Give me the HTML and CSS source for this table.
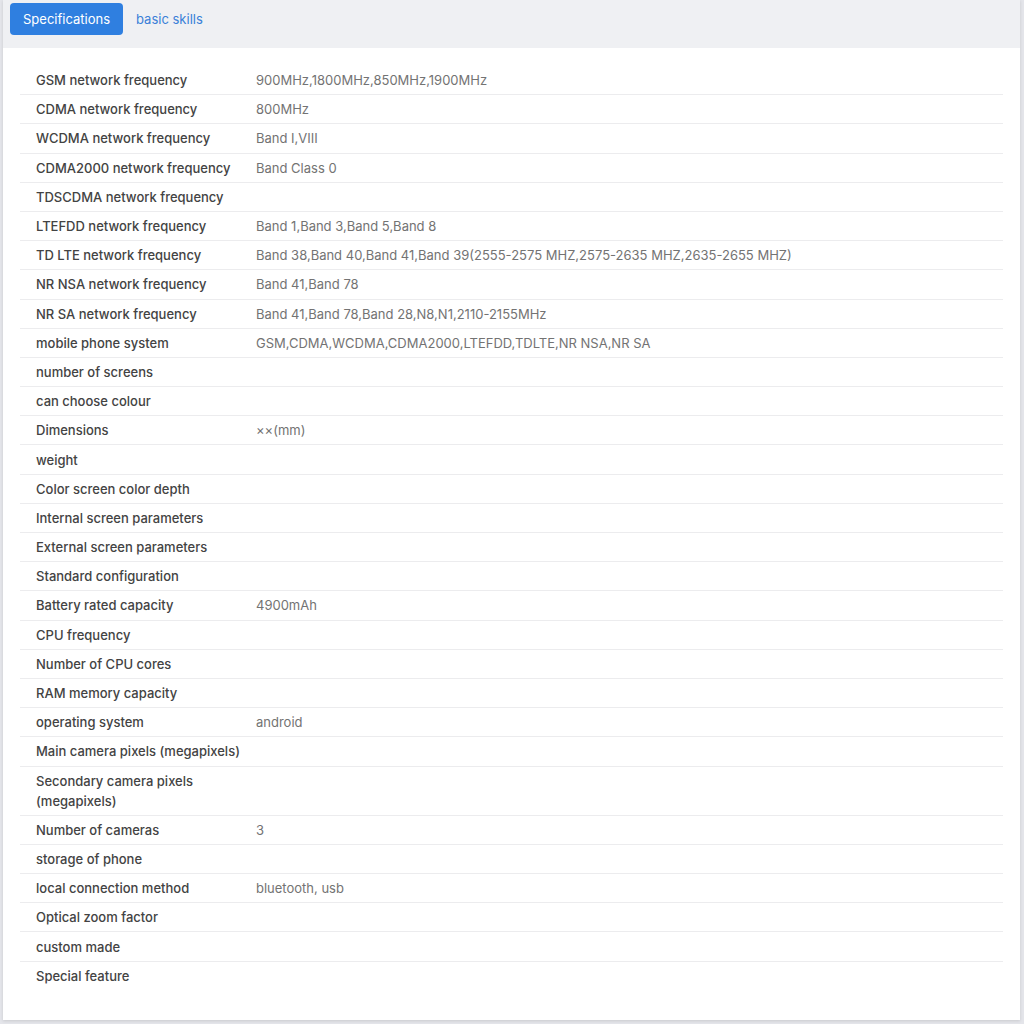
FILE: index.html
```html
<!DOCTYPE html>
<html lang="en">
<head>
    <meta charset="UTF-8">
    <meta name="viewport" content="width=device-width, initial-scale=1.0">
    <title>Specifications</title>
    <link rel="stylesheet" href="styles.css">
</head>
<body>

    <div class="page">
        <div class="tabs">
            <button class="tab active">Specifications</button>
            <button class="tab">basic skills</button>
        </div>

        <div class="panel">
            <table class="spec-table">
                <tr><td class="label">GSM network frequency</td><td class="value">900MHz,1800MHz,850MHz,1900MHz</td></tr>
                <tr><td class="label">CDMA network frequency</td><td class="value">800MHz</td></tr>
                <tr><td class="label">WCDMA network frequency</td><td class="value">Band I,VIII</td></tr>
                <tr><td class="label">CDMA2000 network frequency</td><td class="value">Band Class 0</td></tr>
                <tr><td class="label">TDSCDMA network frequency</td><td class="value"></td></tr>
                <tr><td class="label">LTEFDD network frequency</td><td class="value">Band 1,Band 3,Band 5,Band 8</td></tr>
                <tr><td class="label">TD LTE network frequency</td><td class="value">Band 38,Band 40,Band 41,Band 39(2555-2575 MHZ,2575-2635 MHZ,2635-2655 MHZ)</td></tr>
                <tr><td class="label">NR NSA network frequency</td><td class="value">Band 41,Band 78</td></tr>
                <tr><td class="label">NR SA network frequency</td><td class="value">Band 41,Band 78,Band 28,N8,N1,2110-2155MHz</td></tr>
                <tr><td class="label">mobile phone system</td><td class="value">GSM,CDMA,WCDMA,CDMA2000,LTEFDD,TDLTE,NR NSA,NR SA</td></tr>
                <tr><td class="label">number of screens</td><td class="value"></td></tr>
                <tr><td class="label">can choose colour</td><td class="value"></td></tr>
                <tr><td class="label">Dimensions</td><td class="value">××(mm)</td></tr>
                <tr><td class="label">weight</td><td class="value"></td></tr>
                <tr><td class="label">Color screen color depth</td><td class="value"></td></tr>
                <tr><td class="label">Internal screen parameters</td><td class="value"></td></tr>
                <tr><td class="label">External screen parameters</td><td class="value"></td></tr>
                <tr><td class="label">Standard configuration</td><td class="value"></td></tr>
                <tr><td class="label">Battery rated capacity</td><td class="value">4900mAh</td></tr>
                <tr><td class="label">CPU frequency</td><td class="value"></td></tr>
                <tr><td class="label">Number of CPU cores</td><td class="value"></td></tr>
                <tr><td class="label">RAM memory capacity</td><td class="value"></td></tr>
                <tr><td class="label">operating system</td><td class="value">android</td></tr>
                <tr><td class="label">Main camera pixels (megapixels)</td><td class="value"></td></tr>
                <tr><td class="label">Secondary camera pixels (megapixels)</td><td class="value"></td></tr>
                <tr><td class="label">Number of cameras</td><td class="value">3</td></tr>
                <tr><td class="label">storage of phone</td><td class="value"></td></tr>
                <tr><td class="label">local connection method</td><td class="value">bluetooth, usb</td></tr>
                <tr><td class="label">Optical zoom factor</td><td class="value"></td></tr>
                <tr><td class="label">custom made</td><td class="value"></td></tr>
                <tr><td class="label">Special feature</td><td class="value"></td></tr>
            </table>
        </div>
    </div>

</body>
</html>
```

FILE: styles.css
```css
* {
    margin: 0;
    padding: 0;
    box-sizing: border-box;
    font-family: Inter, 'Liberation Sans', Arial, sans-serif;
}

body {
    background: #e4e5ea;
    height: 1024px;
    overflow: hidden;
}

.page {
    margin: 0 4px 0 3px;
    box-shadow: 0 1px 3px rgba(0, 0, 0, 0.12);
}

.tabs {
    display: flex;
    align-items: center;
    gap: 4px;
    height: 48px;
    padding: 0 7px 10px;
    background: #eff0f3;
}

.tab {
    height: 32px;
    padding: 0 9px;
    border: none;
    border-radius: 4px;
    background: transparent;
    color: #3a80d8;
    font-size: 13px;
    cursor: pointer;
}

.tab.active {
    padding: 0 13px;
    background: #2f7fe0;
    color: white;
}

.panel {
    background: #fff;
    padding: 18px 17px 29px;
    height: 972px;
}

.spec-table {
    width: 100%;
    border-collapse: collapse;
    font-size: 13px;
    line-height: 20px;
}

.spec-table td {
    padding: 4.1px 0;
    border-bottom: 1px solid #ececee;
    vertical-align: middle;
}

.spec-table tr:last-child td {
    border-bottom: none;
}

.spec-table .label {
    width: 236px;
    padding-left: 16px;
    padding-right: 14px;
    color: #434343;
    font-weight: 500;
}

.spec-table .value {
    color: #737373;
}
```
